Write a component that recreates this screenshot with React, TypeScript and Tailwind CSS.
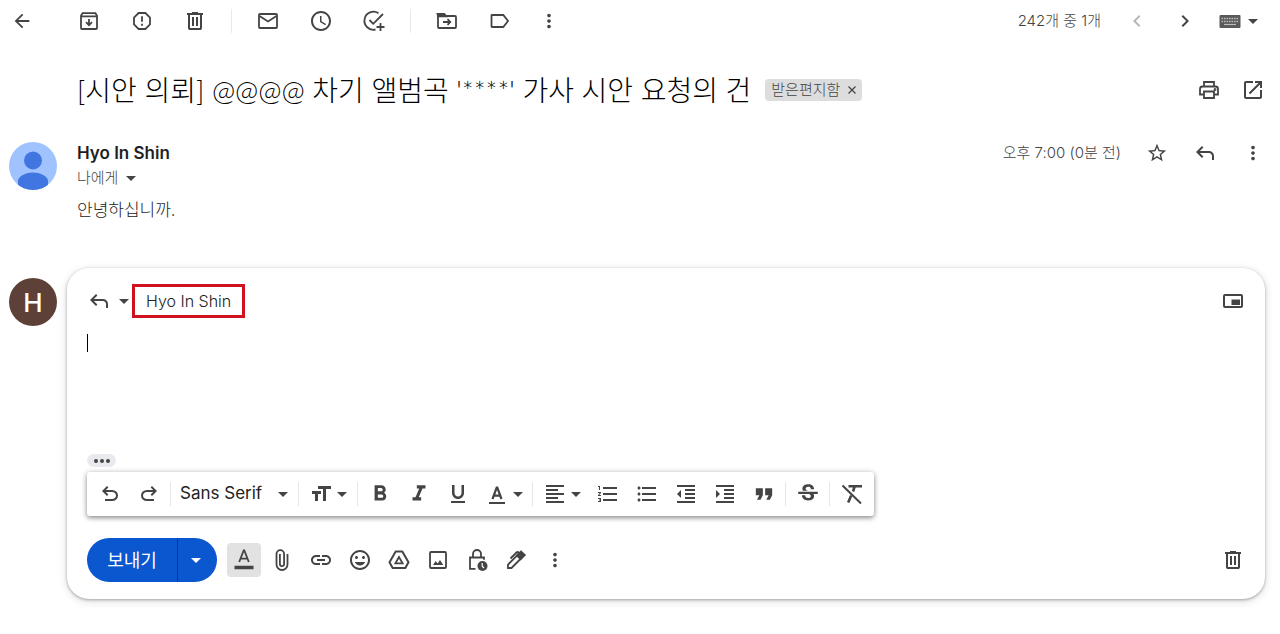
import { useState } from "react";
import type { ReactNode } from "react";
import {
  MdAccessTime, MdArrowBack, MdChevronLeft, MdChevronRight,
  MdFormatAlignLeft, MdFormatBold, MdFormatIndentDecrease,
  MdFormatIndentIncrease, MdFormatItalic, MdFormatListBulleted, MdFormatListNumbered,
  MdFormatQuote, MdFormatSize, MdFormatUnderlined, MdInsertEmoticon, MdLink,
  MdMoreVert, MdOpenInNew, MdStarOutline, MdStrikethroughS,
} from "react-icons/md";

function Svg({ children, line }: { children: ReactNode; line?: boolean }) {
  return (
    <svg
      viewBox="0 0 24 24" width={24} height={24} aria-hidden
      fill={line ? "none" : "currentColor"}
      stroke={line ? "currentColor" : "none"}
      strokeWidth={line ? 1.8 : undefined}
      className="shrink-0"
    >
      {children}
    </svg>
  );
}

const ArchiveIcon = () => (
  <Svg line>
    <path d="M4 6.8 5.6 4.2h12.8L20 6.8V19a1 1 0 0 1-1 1H5a1 1 0 0 1-1-1Z" />
    <path d="M4 7.4h16M12 10v6M9 13.2l3 3 3-3" />
  </Svg>
);

const SpamIcon = () => (
  <Svg line>
    <path d="M8.6 4h6.8L20 8.6v6.8L15.4 20H8.6L4 15.4V8.6Z" />
    <path d="M12 7.2v5.6M12 14.8v2" />
  </Svg>
);

const TrashIcon = () => (
  <Svg>
    <path fillRule="evenodd" d="M7 21q-.8 0-1.4-.6Q5 19.8 5 19V6H4V4h5V3h6v1h5v2h-1v13q0 .8-.6 1.4-.6.6-1.4.6ZM17 6H7v13h10ZM9 17h2V8H9Zm4 0h2V8h-2Z" />
  </Svg>
);

const MailIcon = () => (
  <Svg line>
    <rect x="3" y="5" width="18" height="14" rx="1" />
    <path d="m3.5 7 8.5 5.5L20.5 7" />
  </Svg>
);

const TaskIcon = () => (
  <Svg line>
    <path d="M16.5 4.3A9 9 0 1 0 13.5 20.5" />
    <path d="m7.5 11 3.7 3.8L21 5M18.5 14v8M14.5 18h8" />
  </Svg>
);

const MoveIcon = () => (
  <Svg line>
    <path d="M3 5.5V18a1 1 0 0 0 1 1h16a1 1 0 0 0 1-1V8a1 1 0 0 0-1-1H3" />
    <path d="M2.5 5h6.8l2 2.4H3Z" fill="currentColor" />
    <path d="M8 13h7M12.5 10.2l2.8 2.8-2.8 2.8" />
  </Svg>
);

const LabelIcon = () => (
  <Svg line>
    <path d="M4 6h11.3l4.7 6-4.7 6H4a.5.5 0 0 1-.5-.5v-11A.5.5 0 0 1 4 6Z" />
  </Svg>
);

const KeyboardIcon = () => (
  <Svg>
    <rect x="1.5" y="6" width="21" height="13" rx="1" fill="#5a5a5a" />
    <path stroke="#bbb" strokeWidth="1.6" strokeDasharray="1.6 .9" d="M3.5 9.5h17M3.5 12.5h17" />
    <path stroke="#bbb" strokeWidth="1.2" d="M6 15.5h12" />
  </Svg>
);

const PrintIcon = () => (
  <Svg line>
    <path d="M7 8V4h10v4M7 16.5H3V11q0-2.5 2.5-2.5h13Q21 8.5 21 11v5.5h-4" />
    <path d="M7 13.5h10V20H7Z" />
    <circle cx="18" cy="11.5" r=".6" />
  </Svg>
);

const ReplyIcon = () => (
  <Svg>
    <path d="M19 19v-4q0-1.25-.875-2.125T16 12H6.825l3.6 3.6L9 17l-6-6 6-6 1.425 1.4-3.6 3.6H16q2.075 0 3.538 1.462T21 15v4Z" />
  </Svg>
);

const PopOutIcon = () => (
  <Svg>
    <path fillRule="evenodd" d="M4 5h16q2 0 2 2v10q0 2-2 2H4q-2 0-2-2V7q0-2 2-2Zm0 2v10h16V7Z" />
    <path d="M10.5 10.5H19V16h-8.5Z" />
  </Svg>
);

const undoPath = "M7 19v-2h7.1q1.575 0 2.737-1Q18 15 18 13.5T16.838 11Q15.675 10 14.1 10H7.8l2.6 2.6L9 14 4 9l5-5 1.4 1.4L7.8 8h6.3q2.425 0 4.163 1.575Q20 11.15 20 13.5q0 2.35-1.737 3.925Q16.525 19 14.1 19Z";

const UndoIcon = () => <Svg><path d={undoPath} /></Svg>;
const RedoIcon = () => <Svg><path d={undoPath} transform="matrix(-1 0 0 1 24 0)" /></Svg>;

const TextColorIcon = () => (
  <Svg line>
    <path strokeWidth="2.2" d="m7.5 17 4.2-11.5h.6L16.5 17M9 13.7h6" />
    <path strokeWidth="2" d="M4 21h16" />
  </Svg>
);

const FormatIcon = () => (
  <Svg line>
    <path d="m7.2 14 4.5-11.5h.6L16.8 14M8.8 10.6h6.4" />
    <path d="M2.5 19.5h19" strokeWidth="3.5" />
  </Svg>
);

const ClipIcon = () => (
  <Svg line>
    <path d="M17.5 6v10.5a5.5 5.5 0 0 1-11 0V6a3.8 3.8 0 0 1 7.6 0v10a2.1 2.1 0 0 1-4.2 0V6" />
  </Svg>
);

const DriveIcon = () => (
  <Svg line>
    <path strokeWidth="2" strokeLinejoin="round" d="M8.7 3.5h6.6L21.5 14.3l-3.2 5.7H5.7l-3.2-5.7Z" />
    <path d="m12 9-3.6 6.3h7.2Z" />
  </Svg>
);

const ImageIcon = () => (
  <Svg line>
    <rect x="4" y="4" width="16" height="16" rx="1" />
    <path stroke="none" fill="currentColor" d="m7 17 2.7-4 2 2.5 2.3-3.5 3.3 5Z" />
  </Svg>
);

const LockClockIcon = () => (
  <Svg line>
    <path d="M10.5 20.8H5V9.5h14v2.3M8 9.5V6a4 4 0 0 1 8 0v3.5" />
    <circle cx="17.5" cy="18" r="5" fill="currentColor" stroke="none" />
    <path stroke="#fff" strokeWidth="1.2" d="M17.2 15v3.2l1.8 1.8" />
  </Svg>
);

const PenIcon = () => (
  <Svg line>
    <path d="M4 20v-3.5L14.5 6l3.5 3.5L7.5 20Z" />
    <path d="M13 7.5 17 3.5 20.8 7l-4.2 4.2Z" fill="currentColor" />
    <path d="m6.5 10.5 6-6q1-1 2 0l1.5 1.5" />
  </Svg>
);

const ClearFormatIcon = () => (
  <Svg line>
    <path strokeWidth="2" d="m2.5 3.5 18.5 18" />
    <path strokeWidth="2.6" d="M8.5 4.3H22M14.5 5 13 9.5M11.2 13.5l-3 7" />
  </Svg>
);

const Caret = () => (
  <svg viewBox="0 0 10 5" width={10} height={5} fill="currentColor" aria-hidden className="shrink-0">
    <path d="M0 0h10L5 5Z" />
  </svg>
);

function IconButton({ label, children, className = "w-6" }: { label: string; children: ReactNode; className?: string }) {
  return (
    <button type="button" aria-label={label} title={label} className={`flex h-6 shrink-0 items-center justify-center ${className}`}>
      {children}
    </button>
  );
}

const ToolDivider = () => <span className="mx-[2px] h-6 w-px shrink-0 bg-[#e4e7ea]" />;

function TopBar() {
  return (
    <header className="flex h-[42px] items-center justify-between pr-[22px] pl-[10px]">
      <div className="flex items-center">
        <IconButton label="뒤로"><MdArrowBack size={22} /></IconButton>
        <div className="ml-[43px] flex gap-[29px]">
          <IconButton label="보관"><ArchiveIcon /></IconButton>
          <IconButton label="스팸신고"><SpamIcon /></IconButton>
          <IconButton label="삭제"><TrashIcon /></IconButton>
        </div>
        <span className="mx-6 h-6 w-px bg-[#e8eaed]" />
        <div className="flex gap-[29px]">
          <IconButton label="읽지 않은 상태로 표시"><MailIcon /></IconButton>
          <IconButton label="다시 알림"><MdAccessTime size={24} /></IconButton>
          <IconButton label="할 일에 추가"><TaskIcon /></IconButton>
        </div>
        <span className="mx-6 h-6 w-px bg-[#e8eaed]" />
        <div className="flex gap-[29px]">
          <IconButton label="이동"><MoveIcon /></IconButton>
          <IconButton label="라벨"><LabelIcon /></IconButton>
          <IconButton label="더보기" className="w-4"><MdMoreVert size={22} className="shrink-0" /></IconButton>
        </div>
      </div>
      <div className="flex items-center">
        <span className="text-[15px] font-light">242개 중 1개</span>
        <div className="ml-6 flex gap-6">
          <IconButton label="다음"><MdChevronLeft size={24} className="text-[#b8b8b8]" /></IconButton>
          <IconButton label="이전"><MdChevronRight size={24} /></IconButton>
        </div>
        <button type="button" aria-label="입력 도구" className="ml-[21px] flex items-center gap-[6px]">
          <KeyboardIcon />
          <Caret />
        </button>
      </div>
    </header>
  );
}

function Subject() {
  return (
    <div className="flex h-[96px] items-center justify-between pr-[15px] pl-[77px]">
      <div className="flex items-center gap-[14px]">
        <h1 className="font-['Lato','Noto_Sans_CJK_KR',sans-serif] text-[28px] leading-9 font-light text-black">
          [시안 의뢰] @@@@ 차기 앨범곡 '****' 가사 시안 요청의 건
        </h1>
        <span className="flex h-[22px] items-center gap-2 rounded bg-[#ddd] px-[6px] text-[15px] font-light text-[#444]">
          받은편지함
          <button type="button" aria-label="받은편지함 라벨 삭제">
            <svg viewBox="0 0 8 8" width={8} height={8} stroke="currentColor" strokeWidth="1.2" aria-hidden>
              <path d="m.5.5 7 7M7.5.5l-7 7" />
            </svg>
          </button>
        </span>
      </div>
      <div className="flex gap-5">
        <IconButton label="모두 인쇄"><PrintIcon /></IconButton>
        <IconButton label="새 창에서 열기"><MdOpenInNew size={24} /></IconButton>
      </div>
    </div>
  );
}

function Message() {
  return (
    <article className="flex pr-[15px] pl-[9px]">
      <svg viewBox="0 0 48 48" width={48} height={48} aria-hidden className="mt-1 shrink-0">
        <clipPath id="face"><circle cx="24" cy="24" r="24" /></clipPath>
        <g clipPath="url(#face)">
          <path fill="#a0c3ff" d="M0 0h48v48H0Z" />
          <circle cx="24" cy="18.5" r="9" fill="#4175df" />
          <path fill="#4175df" d="M9 48V39q0-3 4-5.5 4.5-3 11-3t11 3q4 2.500 4 5.500v9Z" />
        </g>
      </svg>
      <div className="ml-5 grow">
        <div className="flex h-[30px] items-center justify-between">
          <h2 className="text-[17px] leading-6 font-semibold text-[#1f1f1f]">Hyo In Shin</h2>
          <div className="flex items-center">
            <time className="text-[15px] font-light">오후 7:00 (0분 전)</time>
            <div className="ml-6 flex gap-6">
              <IconButton label="별표"><MdStarOutline size={22} /></IconButton>
              <IconButton label="답장"><ReplyIcon /></IconButton>
              <IconButton label="더보기"><MdMoreVert size={22} /></IconButton>
            </div>
          </div>
        </div>
        <button type="button" className="flex items-center gap-2 text-[15px] leading-5 font-light text-[#444]">
          나에게 <Caret />
        </button>
        <p className="mt-[10px] text-[17px] leading-6 font-light text-[#222]">안녕하십니까.</p>
      </div>
    </article>
  );
}

function FormatBar() {
  const [font, setFont] = useState("Sans Serif");

  return (
    <div className="flex h-11 w-fit items-center rounded-[3px] bg-white px-[3px] shadow-[0_2px_5px_rgba(0,0,0,0.4),0_0_6px_rgba(0,0,0,0.12)]">
      <IconButton label="실행취소" className="w-[39px]"><UndoIcon /></IconButton>
      <IconButton label="재실행" className="w-[39px]"><RedoIcon /></IconButton>
      <ToolDivider />
      <label className="flex w-[123px] items-center justify-between pr-2 pl-[7px]">
        <select
          aria-label="글꼴" value={font} onChange={e => setFont(e.target.value)}
          className="appearance-none bg-transparent text-[17px] text-[#222] outline-none"
        >
          <option>Sans Serif</option>
          <option>Serif</option>
        </select>
        <Caret />
      </label>
      <ToolDivider />
      <IconButton label="크기" className="w-[54px] gap-1"><MdFormatSize size={24} /><Caret /></IconButton>
      <ToolDivider />
      <IconButton label="굵게" className="w-[39px]"><MdFormatBold size={26} /></IconButton>
      <IconButton label="기울임꼴" className="w-[39px]"><MdFormatItalic size={26} /></IconButton>
      <IconButton label="밑줄" className="w-[39px]"><MdFormatUnderlined size={24} /></IconButton>
      <IconButton label="텍스트 색상" className="w-[53px] gap-1"><TextColorIcon /><Caret /></IconButton>
      <ToolDivider />
      <IconButton label="정렬" className="w-[53px] gap-1"><MdFormatAlignLeft size={24} /><Caret /></IconButton>
      <IconButton label="번호 매기기 목록" className="w-[39px]"><MdFormatListNumbered size={24} /></IconButton>
      <IconButton label="글머리기호 목록" className="w-[39px]"><MdFormatListBulleted size={24} /></IconButton>
      <IconButton label="내어쓰기" className="w-[39px]"><MdFormatIndentDecrease size={24} /></IconButton>
      <IconButton label="들여쓰기" className="w-[39px]"><MdFormatIndentIncrease size={24} /></IconButton>
      <IconButton label="인용" className="w-[39px]"><MdFormatQuote size={28} /></IconButton>
      <ToolDivider />
      <IconButton label="취소선" className="w-[39px]"><MdStrikethroughS size={26} /></IconButton>
      <ToolDivider />
      <IconButton label="서식 제거" className="w-[39px]"><ClearFormatIcon /></IconButton>
    </div>
  );
}

function SendBar() {
  return (
    <div className="flex items-center justify-between">
      <div className="flex items-center">
        <div className="flex h-11 overflow-hidden rounded-full bg-[#0b57d0] text-white">
          <button type="submit" className="w-[90px] text-[18px]">보내기</button>
          <button type="button" aria-label="전송 옵션 더보기" className="flex w-10 items-center justify-center border-l border-[#06388f] pr-1">
            <Caret />
          </button>
        </div>
        <button type="button" aria-label="서식 지정 옵션" className="ml-[10px] flex h-[34px] w-[34px] items-center justify-center rounded bg-[#e2e2e2]">
          <FormatIcon />
        </button>
        <div className="ml-px flex">
          <IconButton label="파일 첨부" className="w-[39px]"><ClipIcon /></IconButton>
          <IconButton label="링크 삽입" className="w-[39px]"><MdLink size={24} /></IconButton>
          <IconButton label="그림 이모티콘 삽입" className="w-[39px]"><MdInsertEmoticon size={24} /></IconButton>
          <IconButton label="드라이브를 사용하여 파일 삽입" className="w-[39px]"><DriveIcon /></IconButton>
          <IconButton label="사진 삽입" className="w-[39px]"><ImageIcon /></IconButton>
          <IconButton label="비밀 모드 사용 설정" className="w-[39px]"><LockClockIcon /></IconButton>
          <IconButton label="서명 삽입" className="w-[39px]"><PenIcon /></IconButton>
          <IconButton label="옵션 더보기" className="w-[39px]"><MdMoreVert size={22} /></IconButton>
        </div>
      </div>
      <IconButton label="임시보관 메일 삭제"><TrashIcon /></IconButton>
    </div>
  );
}

function Reply() {
  const [body, setBody] = useState("");

  return (
    <section className="mt-[46px] flex items-start pr-[15px] pb-[35px] pl-[9px]">
      <div className="mt-[10px] flex h-12 w-12 shrink-0 items-center justify-center rounded-full bg-[#5d4037] text-[26px] font-medium text-white">
        H
      </div>
      <form
        onSubmit={e => e.preventDefault()}
        className="ml-[10px] grow rounded-[22px] bg-white px-5 pt-4 pb-[17px] shadow-[0_1px_3px_rgba(0,0,0,0.3),0_2px_10px_rgba(0,0,0,0.14)]"
      >
        <div className="flex items-center justify-between">
          <div className="flex items-center">
            <button type="button" aria-label="답장 유형" className="flex items-center gap-2">
              <ReplyIcon />
              <Caret />
            </button>
            <button type="button" className="ml-[3px] flex h-[34px] items-center border-3 border-[#d0111f] px-[11px] text-[16px] font-light text-[#222]">
              Hyo In Shin
            </button>
          </div>
          <IconButton label="답장 팝업으로 열기"><PopOutIcon /></IconButton>
        </div>

        <div className="mt-4 flex h-[112px]">
          {body === "" && <span className="h-[18px] w-px bg-black" />}
          <textarea
            aria-label="메일 본문" value={body} onChange={e => setBody(e.target.value)}
            className="grow resize-none text-[16px] leading-5 outline-none"
          />
        </div>

        <button type="button" aria-label="생략된 내용 표시" className="mt-2 mb-[5px] flex h-[13px] w-[29px] items-center justify-center gap-[2px] rounded-full bg-[#e8eaed]">
          <span className="h-1 w-1 rounded-full bg-[#444]" />
          <span className="h-1 w-1 rounded-full bg-[#444]" />
          <span className="h-1 w-1 rounded-full bg-[#444]" />
        </button>

        <FormatBar />
        <div className="mt-[22px]"><SendBar /></div>
      </form>
    </section>
  );
}

export default function App() {
  return (
    <main className="min-h-screen bg-white font-['Inter','Noto_Sans_CJK_KR',sans-serif] text-[#444]">
      <TopBar />
      <Subject />
      <Message />
      <Reply />
    </main>
  );
}
